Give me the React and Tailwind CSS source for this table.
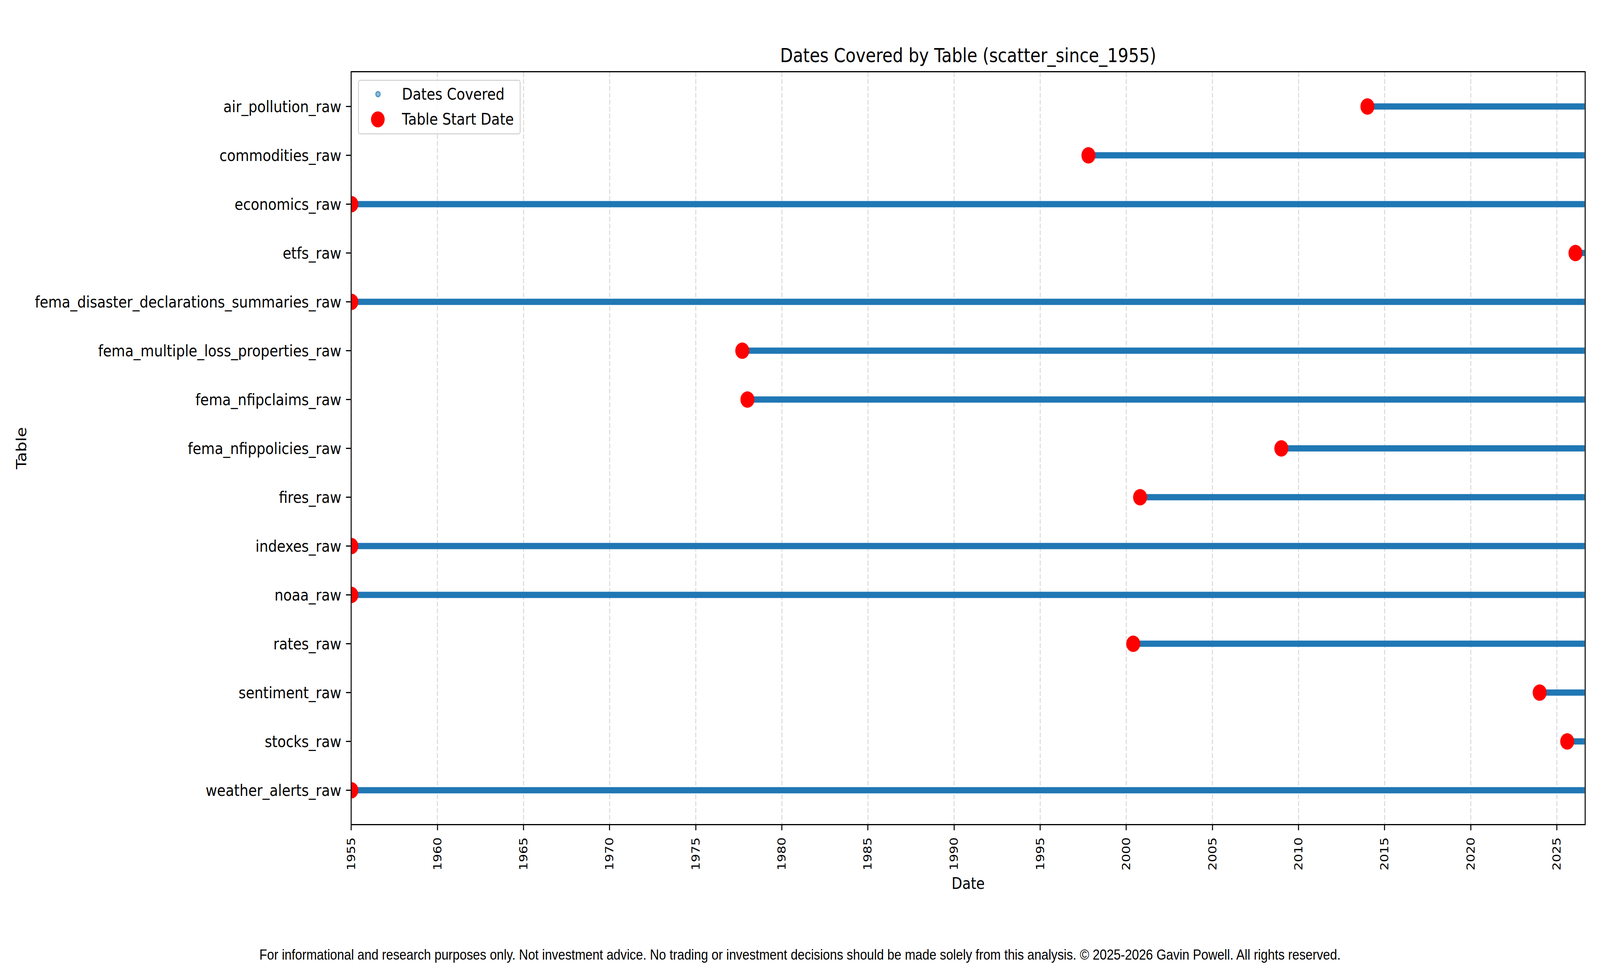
import React from 'react'

// table name, first date (decimal year)
const tables = [
    ['air_pollution_raw', 2014.0],
    ['commodities_raw', 1997.8],
    ['economics_raw', 1955],
    ['etfs_raw', 2026.08],
    ['fema_disaster_declarations_summaries_raw', 1955],
    ['fema_multiple_loss_properties_raw', 1977.7],
    ['fema_nfipclaims_raw', 1978.0],
    ['fema_nfippolicies_raw', 2009.0],
    ['fires_raw', 2000.8],
    ['indexes_raw', 1955],
    ['noaa_raw', 1955],
    ['rates_raw', 2000.4],
    ['sentiment_raw', 2024.0],
    ['stocks_raw', 2025.6],
    ['weather_alerts_raw', 1955],
]

const years = [1955, 1960, 1965, 1970, 1975, 1980, 1985, 1990, 1995, 2000, 2005, 2010, 2015, 2020, 2025]

const FIG_W = 4800
const PLOT_W = 3699
const PLOT_H = 1924
const PX_PER_YEAR = 258.33 / 5

const xOf = (yr) => -1 + (yr - 1955) * PX_PER_YEAR
const yOf = (i) => 87.6 + i * 125

const Legend = () => (
    <div className="absolute left-[19px] top-[19px] w-[488px] h-[140px] border-[3px] border-[#d6d6d6] rounded-[7px] bg-white/80 flex flex-col pt-[2px]">
        <div className="h-[64px] flex items-center pl-[36px]">
            <div className="w-[41px] flex justify-center">
                <span className="w-[16px] h-[16px] rounded-full bg-[#1f77b4]/50 border-[3px] border-[#1f77b4]/60"></span>
            </div>
            <span className="ml-[52px] text-[41.67px] leading-none whitespace-nowrap">Dates Covered</span>
        </div>
        <div className="h-[64px] flex items-center pl-[36px]">
            <div className="w-[41px] flex justify-center">
                <span className="w-[41px] h-[41px] rounded-full bg-[#ff0000]"></span>
            </div>
            <span className="ml-[52px] text-[41.67px] leading-none whitespace-nowrap">Table Start Date</span>
        </div>
    </div>
)

const Plot = () => (
    <div className="relative shrink-0 w-[3705px] h-[1930px] border-[3px] border-black">
        <svg className="absolute inset-0" width={PLOT_W} height={PLOT_H}>
            {years.map((yr) => (
                <line
                    key={yr}
                    x1={xOf(yr)}
                    x2={xOf(yr)}
                    y1={0}
                    y2={PLOT_H}
                    stroke="#dadada"
                    strokeWidth={3}
                    strokeDasharray="12.3 5.3"
                />
            ))}
            {tables.map(([name, start], i) => (
                <line
                    key={name}
                    x1={xOf(start)}
                    x2={PLOT_W}
                    y1={yOf(i)}
                    y2={yOf(i)}
                    stroke="#1f77b4"
                    strokeWidth={16}
                />
            ))}
            {tables.map(([name, start], i) => (
                <circle key={name} cx={xOf(start)} cy={yOf(i)} r={21} fill="#ff0000" />
            ))}
        </svg>
        <Legend />
    </div>
)

const App = () => {
    // the figure is laid out at 4800px; fit it to the real viewport width
    const fit = Math.min(1, window.innerWidth / FIG_W)

    return (
        <div className="w-full h-[2480px] overflow-hidden bg-white">
            <div
                className="w-[4800px] h-[2480px] bg-white text-black font-['DejaVu_Sans',sans-serif]"
                style={{ transform: `scaleX(${fit})`, transformOrigin: 'top left' }}
            >
                <div className="ml-[1054px] w-[3701px] pt-[117px] text-center text-[50px] leading-none whitespace-nowrap">
                    Dates Covered by Table (scatter_since_1955)
                </div>

                <div className="flex mt-[15px]">
                    <div className="w-[44px] shrink-0"></div>
                    <div className="w-[42px] shrink-0 flex items-center">
                        <span className="[writing-mode:vertical-rl] rotate-180 text-[41.67px] leading-none">Table</span>
                    </div>
                    <div className="flex-1 flex flex-col pt-[28px]">
                        {tables.map(([name]) => (
                            <div key={name} className="h-[125px] flex items-center justify-end">
                                <span className="text-[41.67px] leading-none whitespace-nowrap">{name}</span>
                                <span className="ml-[14px] w-[14px] h-[3px] bg-black"></span>
                            </div>
                        ))}
                    </div>
                    <Plot />
                    <div className="w-[43px] shrink-0"></div>
                </div>

                <div className="flex pl-[924.83px] h-[116px]">
                    {years.map((yr) => (
                        <div key={yr} className="w-[258.33px] shrink-0 flex flex-col items-center">
                            <span className="w-[3px] h-[14px] bg-black"></span>
                            <span className="mt-[18px] [writing-mode:vertical-rl] rotate-180 text-[33.33px] leading-none">{yr}</span>
                        </div>
                    ))}
                </div>

                <div className="ml-[1054px] w-[3701px] mt-[12px] text-center text-[41.67px] leading-none">Date</div>

                <div className="mt-[143px] text-center text-[37.8px] leading-none whitespace-nowrap font-['Liberation_Sans',Arial,sans-serif]">
                    For informational and research purposes only. Not investment advice. No trading or investment decisions should be made solely from this analysis. © 2025-2026 Gavin Powell. All rights reserved.
                </div>
            </div>
        </div>
    )
}

export default App
